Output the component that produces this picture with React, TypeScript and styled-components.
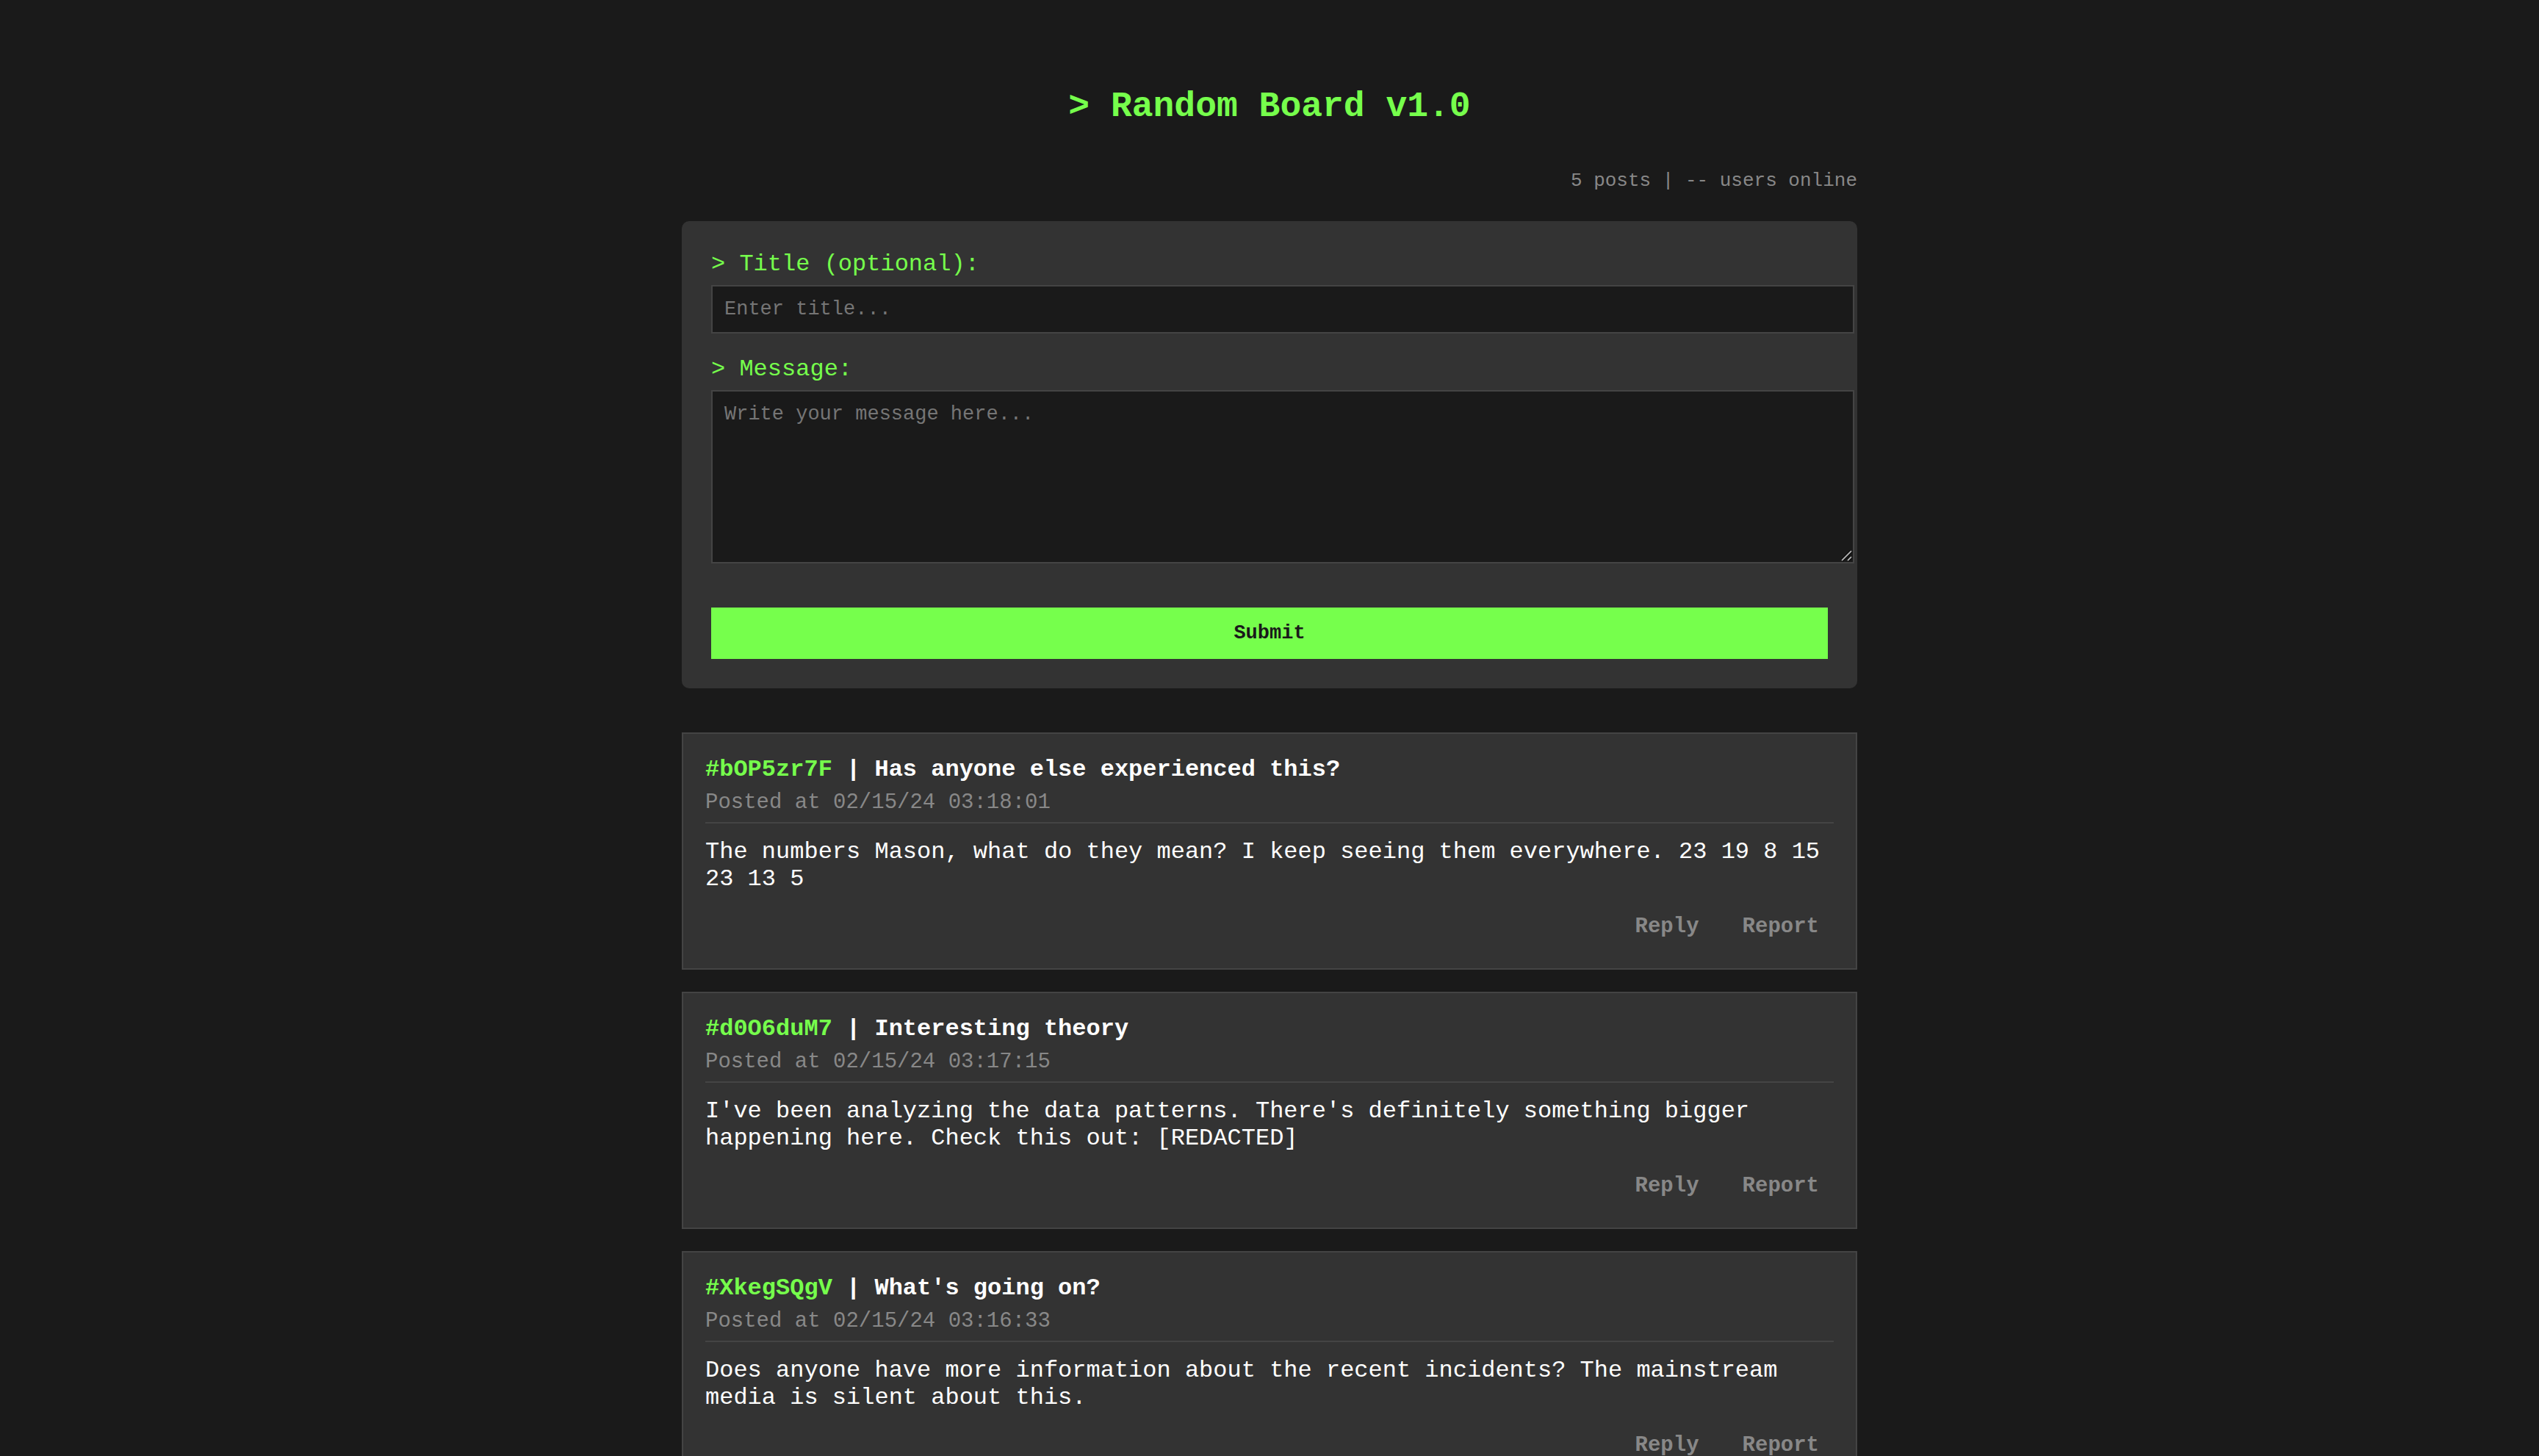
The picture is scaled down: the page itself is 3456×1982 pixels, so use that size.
import React from "react";
import styled, { createGlobalStyle } from "styled-components";

const color = {
  page: "#1a1a1a",
  panel: "#333333",
  line: "#444444",
  accent: "#76ff4c",
  text: "#ffffff",
  muted: "#888888",
  hint: "#757575",
};

const mono = `"Courier New", "Liberation Mono", monospace`;

const GlobalStyle = createGlobalStyle`
  body {
    margin: 0;
    background: ${color.page};
    color: ${color.text};
    font-family: ${mono};
    font-size: 32px;
    line-height: 37px;
  }
`;

const Page = styled.main`
  max-width: 1600px;
  margin: 0 auto;
  padding: 118px 40px 40px;
`;

const Heading = styled.h1`
  margin: 0 0 60px;
  color: ${color.accent};
  font-size: 48px;
  line-height: 54px;
  text-align: center;
`;

const Stats = styled.p`
  margin: 0 0 40px;
  color: ${color.muted};
  font-size: 26px;
  line-height: 29px;
  text-align: right;
`;

const Form = styled.form`
  display: flex;
  flex-direction: column;
  gap: 30px;
  margin-bottom: 60px;
  padding: 40px;
  border-radius: 10px;
  background: ${color.panel};
`;

const Field = styled.div`
  display: flex;
  flex-direction: column;
  gap: 10px;
`;

const Label = styled.label`
  color: ${color.accent};
`;

const TextInput = styled.input`
  box-sizing: content-box;
  width: 100%;
  height: 30px;
  padding: 16px;
  border: 2px solid ${color.line};
  border-radius: 0;
  outline: none;
  background: ${color.page};
  color: ${color.text};
  font-family: ${mono};
  font-size: 27px;
  line-height: 30px;

  &::placeholder {
    color: ${color.hint};
  }
`;

const TextArea = styled(TextInput).attrs({ as: "textarea" })`
  display: block;
  height: 200px;
  margin: 0;
  resize: vertical;

  &::-webkit-resizer {
    background: transparent;
  }
`;

/* Grows past the field by the text area's own padding and border. */
const AreaFrame = styled.div`
  position: relative;
  width: 100%;
  margin-bottom: 30px;
  padding-right: 36px;
`;

const Grip = styled.svg`
  position: absolute;
  right: 2px;
  bottom: 2px;
  width: 16px;
  height: 16px;
  pointer-events: none;
`;

const Submit = styled.button`
  height: 70px;
  padding: 0 20px;
  border: 0;
  background: ${color.accent};
  color: ${color.page};
  font-family: ${mono};
  font-size: 27px;
  font-weight: bold;
  line-height: 30px;
  cursor: pointer;
`;

const Posts = styled.section`
  display: flex;
  flex-direction: column;
  gap: 30px;
`;

const Card = styled.article`
  padding: 30px;
  border: 2px solid ${color.line};
  background: ${color.panel};
`;

const CardHeader = styled.header`
  padding-bottom: 10px;
  border-bottom: 2px solid ${color.line};
`;

const CardTitle = styled.h2`
  margin: 0 0 10px;
  font-size: 32px;
  line-height: 37px;
`;

const PostId = styled.span`
  color: ${color.accent};
`;

const Posted = styled.p`
  margin: 0;
  color: ${color.muted};
  font-size: 29px;
  line-height: 33px;
`;

const Body = styled.p`
  margin: 20px 0;
`;

const Actions = styled.div`
  display: flex;
  justify-content: flex-end;
  gap: 19px;
`;

const Action = styled.button`
  padding: 10px 20px;
  border: 0;
  background: none;
  color: ${color.muted};
  font-family: ${mono};
  font-size: 29px;
  font-weight: bold;
  line-height: 33px;
  cursor: pointer;
`;

const posts = [
  {
    id: "bOP5zr7F",
    title: "Has anyone else experienced this?",
    time: "02/15/24 03:18:01",
    body: "The numbers Mason, what do they mean? I keep seeing them everywhere. 23 19 8 15 23 13 5",
  },
  {
    id: "d0O6duM7",
    title: "Interesting theory",
    time: "02/15/24 03:17:15",
    body: "I've been analyzing the data patterns. There's definitely something bigger happening here. Check this out: [REDACTED]",
  },
  {
    id: "XkegSQgV",
    title: "What's going on?",
    time: "02/15/24 03:16:33",
    body: "Does anyone have more information about the recent incidents? The mainstream media is silent about this.",
  },
];

export default function App() {
  return (
    <>
      <GlobalStyle />
      <Page>
        <Heading>&gt; Random Board v1.0</Heading>
        <Stats>5 posts | -- users online</Stats>
        <Form onSubmit={(event: React.FormEvent) => event.preventDefault()}>
          <Field>
            <Label htmlFor="title">&gt; Title (optional):</Label>
            <TextInput id="title" type="text" placeholder="Enter title..." />
          </Field>
          <Field>
            <Label htmlFor="message">&gt; Message:</Label>
            <AreaFrame>
              <TextArea id="message" placeholder="Write your message here..." />
              <Grip viewBox="0 0 16 16" fill="none" aria-hidden="true">
                <path d="M1 14 14 1M9 14 14 9" stroke="#000000" strokeWidth="4" />
                <path d="M1 14 14 1M9 14 14 9" stroke="#aaaaaa" strokeWidth="2" />
              </Grip>
            </AreaFrame>
          </Field>
          <Submit type="submit">Submit</Submit>
        </Form>
        <Posts>
          {posts.map((post) => (
            <Card key={post.id}>
              <CardHeader>
                <CardTitle>
                  <PostId>#{post.id}</PostId> | {post.title}
                </CardTitle>
                <Posted>Posted at {post.time}</Posted>
              </CardHeader>
              <Body>{post.body}</Body>
              <Actions>
                <Action type="button">Reply</Action>
                <Action type="button">Report</Action>
              </Actions>
            </Card>
          ))}
        </Posts>
      </Page>
    </>
  );
}
